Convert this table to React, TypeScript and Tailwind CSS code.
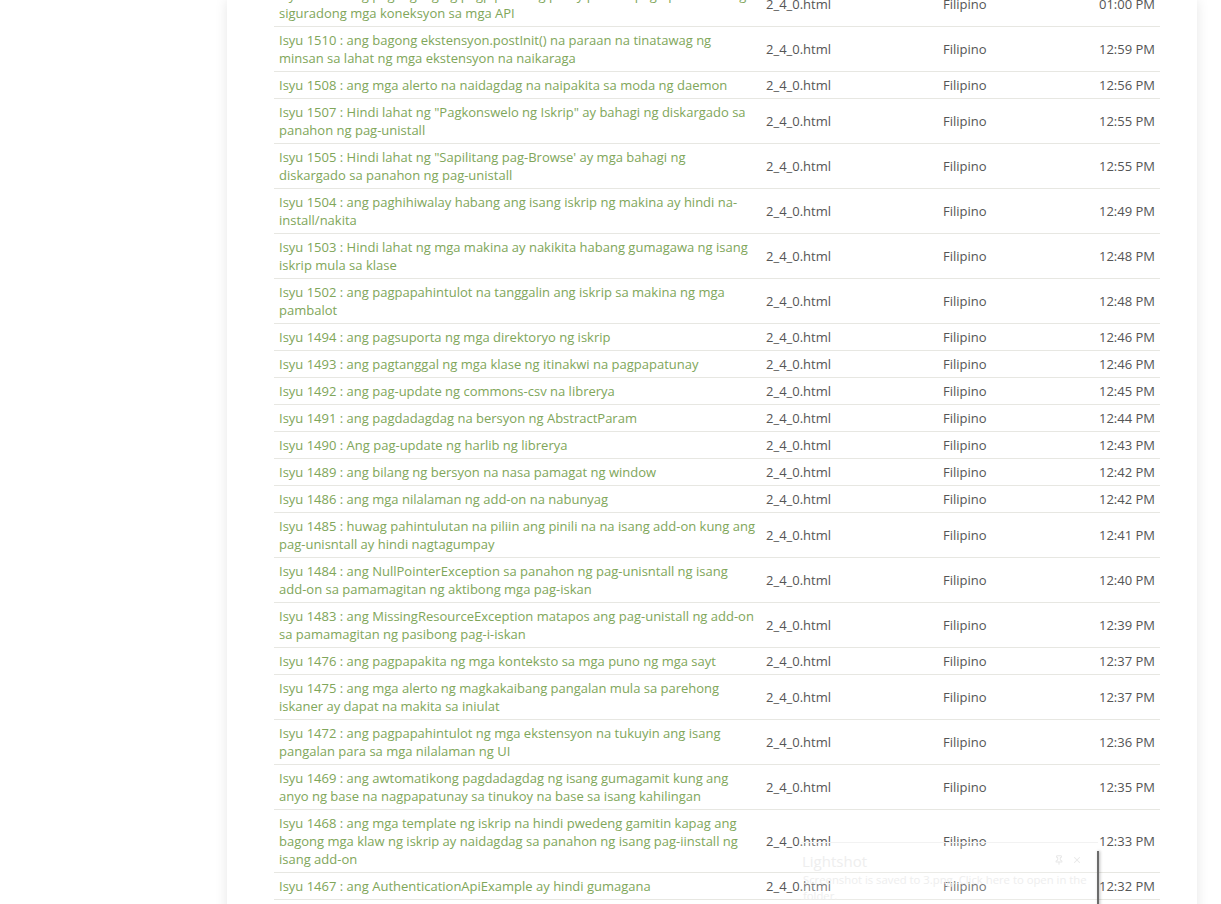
import React from 'react';
import { Pin, X } from 'lucide-react';

type Issue = { title: string; time: string };

const issues: Issue[] = [
  { title: 'Isyu 1511 : ang pagdagdag ng pagpipilian ng proxy para sa pag-aprubahan ng siguradong mga koneksyon sa mga API', time: '01:00 PM' },
  { title: 'Isyu 1510 : ang bagong ekstensyon.postInit() na paraan na tinatawag ng minsan sa lahat ng mga ekstensyon na naikaraga', time: '12:59 PM' },
  { title: 'Isyu 1508 : ang mga alerto na naidagdag na naipakita sa moda ng daemon', time: '12:56 PM' },
  { title: 'Isyu 1507 : Hindi lahat ng "Pagkonswelo ng Iskrip" ay bahagi ng diskargado sa panahon ng pag-unistall', time: '12:55 PM' },
  { title: 'Isyu 1505 : Hindi lahat ng "Sapilitang pag-Browse\' ay mga bahagi ng diskargado sa panahon ng pag-unistall', time: '12:55 PM' },
  { title: 'Isyu 1504 : ang paghihiwalay habang ang isang iskrip ng makina ay hindi na-install/nakita', time: '12:49 PM' },
  { title: 'Isyu 1503 : Hindi lahat ng mga makina ay nakikita habang gumagawa ng isang iskrip mula sa klase', time: '12:48 PM' },
  { title: 'Isyu 1502 : ang pagpapahintulot na tanggalin ang iskrip sa makina ng mga pambalot', time: '12:48 PM' },
  { title: 'Isyu 1494 : ang pagsuporta ng mga direktoryo ng iskrip', time: '12:46 PM' },
  { title: 'Isyu 1493 : ang pagtanggal ng mga klase ng itinakwi na pagpapatunay', time: '12:46 PM' },
  { title: 'Isyu 1492 : ang pag-update ng commons-csv na librerya', time: '12:45 PM' },
  { title: 'Isyu 1491 : ang pagdadagdag na bersyon ng AbstractParam', time: '12:44 PM' },
  { title: 'Isyu 1490 : Ang pag-update ng harlib ng librerya', time: '12:43 PM' },
  { title: 'Isyu 1489 : ang bilang ng bersyon na nasa pamagat ng window', time: '12:42 PM' },
  { title: 'Isyu 1486 : ang mga nilalaman ng add-on na nabunyag', time: '12:42 PM' },
  { title: 'Isyu 1485 : huwag pahintulutan na piliin ang pinili na na isang add-on kung ang pag-unisntall ay hindi nagtagumpay', time: '12:41 PM' },
  { title: 'Isyu 1484 : ang NullPointerException sa panahon ng pag-unisntall ng isang add-on sa pamamagitan ng aktibong mga pag-iskan', time: '12:40 PM' },
  { title: 'Isyu 1483 : ang MissingResourceException matapos ang pag-unistall ng add-on sa pamamagitan ng pasibong pag-i-iskan', time: '12:39 PM' },
  { title: 'Isyu 1476 : ang pagpapakita ng mga konteksto sa mga puno ng mga sayt', time: '12:37 PM' },
  { title: 'Isyu 1475 : ang mga alerto ng magkakaibang pangalan mula sa parehong iskaner ay dapat na makita sa iniulat', time: '12:37 PM' },
  { title: 'Isyu 1472 : ang pagpapahintulot ng mga ekstensyon na tukuyin ang isang pangalan para sa mga nilalaman ng UI', time: '12:36 PM' },
  { title: 'Isyu 1469 : ang awtomatikong pagdadagdag ng isang gumagamit kung ang anyo ng base na nagpapatunay sa tinukoy na base sa isang kahilingan', time: '12:35 PM' },
  { title: 'Isyu 1468 : ang mga template ng iskrip na hindi pwedeng gamitin kapag ang bagong mga klaw ng iskrip ay naidagdag sa panahon ng isang pag-iinstall ng isang add-on', time: '12:33 PM' },
  { title: 'Isyu 1467 : ang AuthenticationApiExample ay hindi gumagana', time: '12:32 PM' },
  { title: 'Isyu 1466 : ang pag-aayos ng mga tab sa pangunahing window', time: '12:31 PM' },
];

const cell = 'py-[4px] leading-[18px] border-b border-[#e7e7e2] align-middle';

const App: React.FC = () => {
  return (
    <div className="relative w-full h-[904px] overflow-hidden bg-white text-[13px] font-['Open_Sans','Liberation_Sans',sans-serif]">
      <div className="flow-root ml-[227px] w-[970px] h-[940px] bg-white shadow-[0_0_12px_rgba(0,0,0,0.10)] pl-[47px] pr-[37px]">
        <table className="table-fixed border-collapse w-[886px] -mt-[18px]">
          <colgroup>
            <col className="w-[487px]" />
            <col className="w-[177px]" />
            <col className="w-[120px]" />
            <col className="w-[102px]" />
          </colgroup>
          <tbody>
            {issues.map(issue => (
              <tr key={issue.title}>
                <td className={`${cell} pl-[5px] pr-[6px] text-[#80a65a]`}>{issue.title}</td>
                <td className={`${cell} px-[5px] text-[#555555]`}>2_4_0.html</td>
                <td className={`${cell} px-[5px] text-[#555555]`}>Filipino</td>
                <td className={`${cell} px-[5px] text-[#555555] text-right`}>{issue.time}</td>
              </tr>
            ))}
          </tbody>
        </table>
      </div>

      {/* Lightshot notification, mostly transparent */}
      <div className="absolute left-[801px] top-[842px] w-[297px] h-[90px] bg-white/20 border-t border-[#f2f2f2]">
        <div className="absolute right-[-1px] top-[8px] bottom-0 w-[2px] bg-[#6b6b6b] shadow-[1px_0_3px_rgba(0,0,0,0.3)]" />
        <div className="flex items-center justify-between pl-[1px] pr-[16px] pt-[6px] h-[29px]">
          <span className="text-[15px] leading-[20px] text-[#eeeeee]">Lightshot</span>
          <div className="flex items-center gap-[8px] pb-[2px] text-[#e8e8e8]">
            <Pin size={10} strokeWidth={2.5} />
            <X size={10} strokeWidth={2.5} />
          </div>
        </div>
        <p className="pl-[2px] pr-[4px] text-[11.3px] leading-[16px] text-[#eeeeee]">
          Screenshot is saved to 3.png. Click here to open in the folder.
        </p>
      </div>
    </div>
  );
};

export default App;
